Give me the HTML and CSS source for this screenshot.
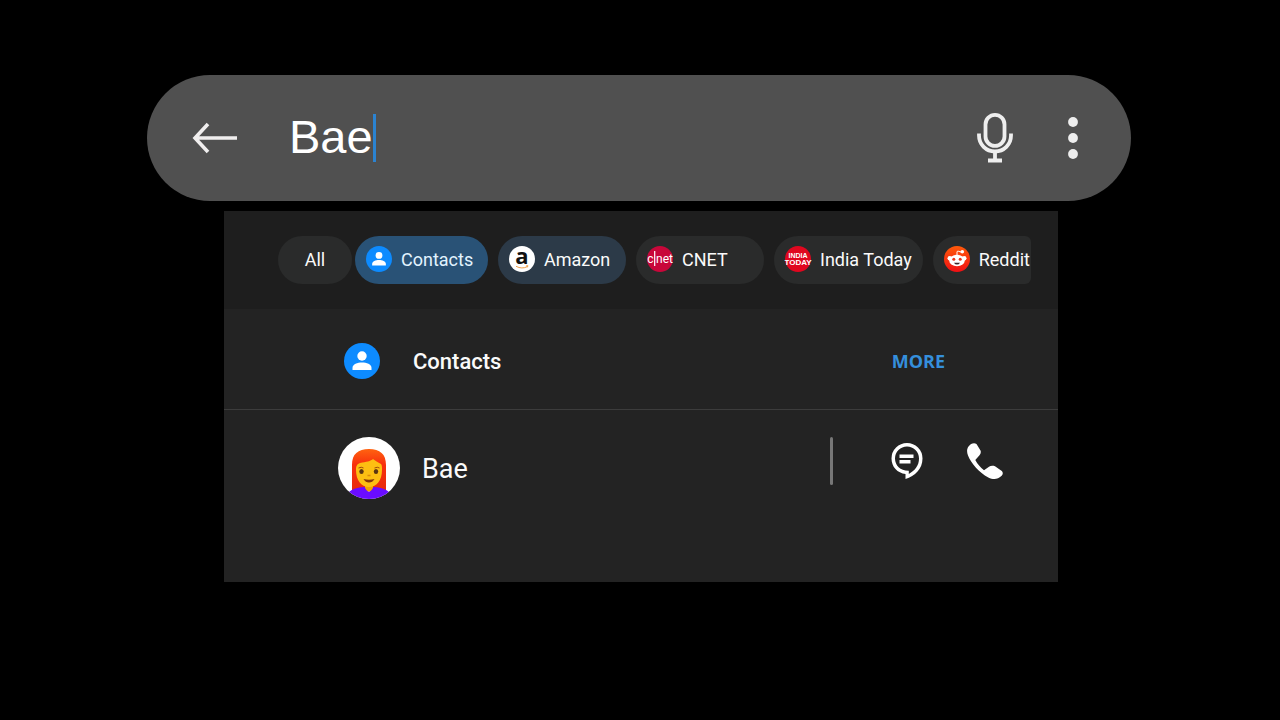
FILE: index.html
```
<!DOCTYPE html>
<html lang="en">
<head>
    <meta charset="UTF-8">
    <meta name="viewport" content="width=device-width, initial-scale=1.0">
    <title>Search</title>
    <link rel="stylesheet" href="styles.css">
</head>
<body>
    <main class="page">
        <form class="search-bar" role="search">
            <button type="button" class="icon-btn" aria-label="Back">
                <svg width="46" height="32" viewBox="0 0 46 32" fill="none" stroke="#f0eeee" stroke-width="3.6">
                    <path d="M16 2 3 16l13 14M3.500 16H45"/>
                </svg>
            </button>
            <div class="search-field">
                <input type="text" class="search-input" aria-label="Search" value="Bae" autocomplete="off" spellcheck="false">
                <span class="caret"></span>
            </div>
            <button type="button" class="icon-btn" aria-label="Voice search">
                <svg width="36" height="50" viewBox="0 0 36 50" fill="none" stroke="#eee" stroke-width="3.8">
                    <rect x="8.500" y="1.900" width="19" height="31" rx="9.500"/>
                    <path d="M2 20.500v2c0 9 7 16 16 16s16-7 16-16v-2M18 38.500v8M11 47.500h14"/>
                </svg>
            </button>
            <button type="button" class="icon-btn" aria-label="More options">
                <svg width="10" height="42" viewBox="0 0 10 42" fill="#eee">
                    <circle cx="5" cy="5" r="4.900"/>
                    <circle cx="5" cy="21" r="4.900"/>
                    <circle cx="5" cy="37" r="4.900"/>
                </svg>
            </button>
        </form>

        <section class="panel">
            <nav class="filters" aria-label="Filters">
                <div class="filter-list">
                    <div class="chip-group">
                        <button type="button" class="chip chip-all">All</button>
                        <button type="button" class="chip chip-active">
                            <svg class="chip-icon" viewBox="0 0 36 36">
                                <circle cx="18" cy="18" r="18" fill="#0d8bff"/>
                                <circle cx="18" cy="13" r="4.700" fill="#fff"/>
                                <path d="M8.500 27v-2c0-4 5-5.500 9.500-5.500s9.500 1.500 9.500 5.500v2z" fill="#fff"/>
                            </svg>
                            Contacts
                        </button>
                    </div>
                    <button type="button" class="chip chip-visited">
                        <svg class="chip-icon" viewBox="0 0 26 26">
                            <circle cx="13" cy="13" r="13" fill="#fff"/>
                            <text class="logo-amazon" x="13" y="18" text-anchor="middle">a</text>
                            <path d="M7 20.300q6 3.200 11.500.2M17 20l2-.3-.7 1.700" fill="none" stroke="#f0a04b" stroke-width="1"/>
                        </svg>
                        Amazon
                    </button>
                    <button type="button" class="chip">
                        <svg class="chip-icon" viewBox="0 0 26 26">
                            <circle cx="13" cy="13" r="13" fill="#c8073a"/>
                            <text class="logo-cnet" x="3.500" y="17" text-anchor="middle">c</text>
                            <path d="M7.700 5v15" stroke="#fff" stroke-width="1.200"/>
                            <text class="logo-cnet" x="17.500" y="17" text-anchor="middle">net</text>
                        </svg>
                        CNET
                    </button>
                    <button type="button" class="chip">
                        <svg class="chip-icon" viewBox="0 0 26 26">
                            <circle cx="13" cy="13" r="13" fill="#e0071f"/>
                            <text class="logo-india" x="13" y="12" text-anchor="middle">INDIA</text>
                            <text class="logo-today" x="13" y="19" text-anchor="middle">TODAY</text>
                        </svg>
                        India Today
                    </button>
                    <button type="button" class="chip">
                        <svg class="chip-icon" viewBox="0 0 26 26">
                            <defs>
                                <linearGradient id="reddit" x1="0" y1="0" x2="0" y2="1">
                                    <stop offset="0" stop-color="#ff5a0a"/>
                                    <stop offset="1" stop-color="#f00f14"/>
                                </linearGradient>
                            </defs>
                            <circle cx="13" cy="13" r="13" fill="url(#reddit)"/>
                            <path d="M13 10V6q0-1 1.200-.8L17 6" fill="none" stroke="#fff" stroke-width="1"/>
                            <circle cx="18.300" cy="5.800" r="1.800" fill="#fff"/>
                            <circle cx="5.800" cy="12.200" r="2.300" fill="#fff"/>
                            <circle cx="20.200" cy="12.200" r="2.300" fill="#fff"/>
                            <ellipse cx="13" cy="14.500" rx="7.800" ry="5.800" fill="#fff"/>
                            <circle cx="9.800" cy="13.300" r="1.500" fill="#e8361c"/>
                            <circle cx="16.200" cy="13.300" r="1.500" fill="#e8361c"/>
                            <path d="M10 16.700h6q-1 1.900-3 1.900t-3-1.900" fill="#40262a"/>
                        </svg>
                        Reddit
                    </button>
                </div>
            </nav>

            <div class="section-header">
                <svg class="section-icon" viewBox="0 0 36 36">
                    <circle cx="18" cy="18" r="18" fill="#0d8bff"/>
                    <circle cx="18" cy="13" r="4.700" fill="#fff"/>
                    <path d="M8.500 27v-2c0-4 5-5.500 9.500-5.500s9.500 1.500 9.500 5.500v2z" fill="#fff"/>
                </svg>
                <h2>Contacts</h2>
                <button type="button" class="more-btn">MORE</button>
            </div>

            <div class="contact">
                <svg class="avatar" viewBox="0 0 62 62">
                    <defs>
                        <clipPath id="round"><circle cx="31" cy="31" r="31"/></clipPath>
                        <linearGradient id="hair" x1="0" y1="0" x2="0" y2="1">
                            <stop offset="0" stop-color="#ff6310"/>
                            <stop offset=".35" stop-color="#f8300d"/>
                            <stop offset="1" stop-color="#e62b0a"/>
                        </linearGradient>
                    </defs>
                    <g clip-path="url(#round)">
                        <rect width="62" height="62" fill="#fff"/>
                        <path d="M14 55V28C14 17 20 12 31 12s17 5 17 16v27q-6 3-11-1H25q-5 4-11 1z" fill="url(#hair)"/>
                        <path d="M8 62c1-8 7-11.500 19-12q4 9 8 0c12 .5 18 4 19 12z" fill="#6a0cff"/>
                        <path d="M27 46v5q4 7 8 0v-5z" fill="#f2a300"/>
                        <path d="M18 33c0-4 1-6 4-7 6-1 11-2 13-4 2 2 5 3 8 5 1 1 1 3 1 6 0 10-5 17-13 17s-13-7-13-17z" fill="#fdbf12"/>
                        <path d="M20.500 31q3-1.500 5 0M36.500 31q3-1.500 5 0" fill="none" stroke="#9c4a0c" stroke-width="1"/>
                        <ellipse cx="23.500" cy="34.500" rx="2.200" ry="2.500" fill="#5b3512"/>
                        <ellipse cx="38" cy="34.500" rx="2.200" ry="2.500" fill="#5b3512"/>
                        <path d="M29.500 38.500h3" stroke="#dd8b0c" stroke-width="1.500"/>
                        <path d="M25.500 42q5.500 1.500 11 0-2 3.600-5.500 3.600T25.500 42z" fill="#86380b"/>
                    </g>
                </svg>
                <h3>Bae</h3>
                <div class="actions">
                    <span class="separator"></span>
                    <button type="button" class="icon-btn" aria-label="Message">
                        <svg width="32" height="36" viewBox="0 0 32 36" fill="#fff">
                            <path fill-rule="evenodd" d="M16 0A15.500 15.500 0 0 0 .5 15.500C.5 24 6.500 30 14.500 31v5C24 33 31.500 26 31.500 15.500A15.500 15.500 0 0 0 16 0zm0 3.500A12.200 12.200 0 0 1 28 15.500c0 7-4 12-10.200 15.500v-3.200C9.500 28 4 22.500 4 15.500a12 12 0 0 1 12-12z"/>
                            <path d="M8.500 11.500h14V15h-14zM8.500 17h11v3.400h-11z"/>
                        </svg>
                    </button>
                    <button type="button" class="icon-btn" aria-label="Call">
                        <svg width="36" height="36" viewBox="0 0 36 36">
                            <path d="M1.500 3.500C3.500.5 7-.7 9.500.9l4 6.600c.7 1.500.2 3.200-1 4.800L8.300 17c2.200 4 5 7.500 8.700 10.200l5-3.500c1.500-1 4-1.200 6-.4l6.800 4.700c1.500 1.500 1.200 3.500-.5 5-3.500 3.400-8 3.800-13 1.400C12 29.500 4.500 21 1 12.500-.3 9-.3 6 1.500 3.500z" fill="#fff"/>
                        </svg>
                    </button>
                </div>
            </div>
        </section>
    </main>
</body>
</html>
```
FILE: styles.css
```
* {
    margin: 0;
    padding: 0;
    box-sizing: border-box;
}

body {
    font-family: Roboto, "Noto Sans", sans-serif;
    background: #000;
    color: #fafafa;
    min-height: 100vh;
}

button {
    background: none;
    border: none;
    color: inherit;
    font-family: inherit;
    cursor: pointer;
}

svg {
    display: block;
    flex-shrink: 0;
}

.page {
    padding: 75px 149px 0 147px;
}

/* Search bar */
.search-bar {
    display: flex;
    align-items: center;
    height: 126px;
    padding: 0 53px 0 45px;
    background: #505050;
    border-radius: 63px;
}

.search-bar .icon-btn + .icon-btn {
    margin-left: 55px;
}

.search-field {
    position: relative;
    flex: 1;
    min-width: 0;
    margin-left: 51px;
}

.search-input {
    display: block;
    width: 100%;
    height: 56px;
    padding-bottom: 4px;
    background: none;
    border: none;
    outline: none;
    color: #fff;
    font-family: "Liberation Sans", Arial, sans-serif;
    font-size: 47px;
}

.caret {
    position: absolute;
    left: 84px;
    top: 4px;
    width: 3px;
    height: 48px;
    background: #2b83d1;
}

/* Results panel */
.panel {
    margin: 10px 73px 0 77px;
    padding-bottom: 81px;
    background: #232323;
}

.filters {
    padding: 25px 27px 25px 54px;
    background: #1e1e1e;
}

.filter-list {
    display: flex;
    gap: 10px;
    overflow: hidden;
    border-radius: 0 6px 6px 0;
}

.chip-group {
    display: flex;
    flex-shrink: 0;
    gap: 3px;
}

.chip {
    display: flex;
    flex-shrink: 0;
    align-items: center;
    gap: 9px;
    min-width: 128px;
    height: 48px;
    padding: 0 11px 2px;
    border-radius: 24px;
    background: #2a2b2b;
    font-size: 18px;
    white-space: nowrap;
}

.chip-all {
    justify-content: center;
    min-width: 74px;
}

.chip-active {
    min-width: 133px;
    background: #295276;
    color: #e2f4ff;
}

.chip-visited {
    background: #2c3a48;
}

.chip-icon {
    width: 26px;
    height: 26px;
    overflow: visible;
}

.logo-amazon {
    font: bold 22px "Open Sans", sans-serif;
    fill: #111;
}

.logo-cnet {
    font: 12px Roboto, sans-serif;
    fill: #fff;
}

.logo-india {
    font: bold 7px "Liberation Sans", Arial, sans-serif;
    fill: #fff;
}

.logo-today {
    font: bold 8px "Liberation Sans", Arial, sans-serif;
    fill: #fff;
}

.section-header {
    display: flex;
    align-items: center;
    height: 101px;
    padding: 4px 113px 0 120px;
    border-bottom: 1px solid #3c3c3c;
}

.section-icon {
    width: 36px;
    height: 36px;
}

.section-header h2 {
    flex: 1;
    margin-left: 33px;
    font-size: 22px;
    font-weight: 500;
}

.more-btn {
    color: #358fdc;
    font-family: "Open Sans", "Noto Sans", sans-serif;
    font-size: 18px;
    font-weight: 700;
}

.contact {
    display: flex;
    align-items: flex-start;
    padding: 27px 55px 0 114px;
}

.avatar {
    width: 62px;
    height: 62px;
}

.contact h3 {
    flex: 1;
    margin-left: 22px;
    font-size: 27px;
    font-weight: 400;
    line-height: 64px;
}

.actions {
    display: flex;
    align-items: center;
    height: 48px;
}

.separator {
    width: 3px;
    height: 48px;
    margin-right: 58px;
    border-radius: 2px;
    background: #777;
}

.actions .icon-btn + .icon-btn {
    margin-left: 44px;
}
```
